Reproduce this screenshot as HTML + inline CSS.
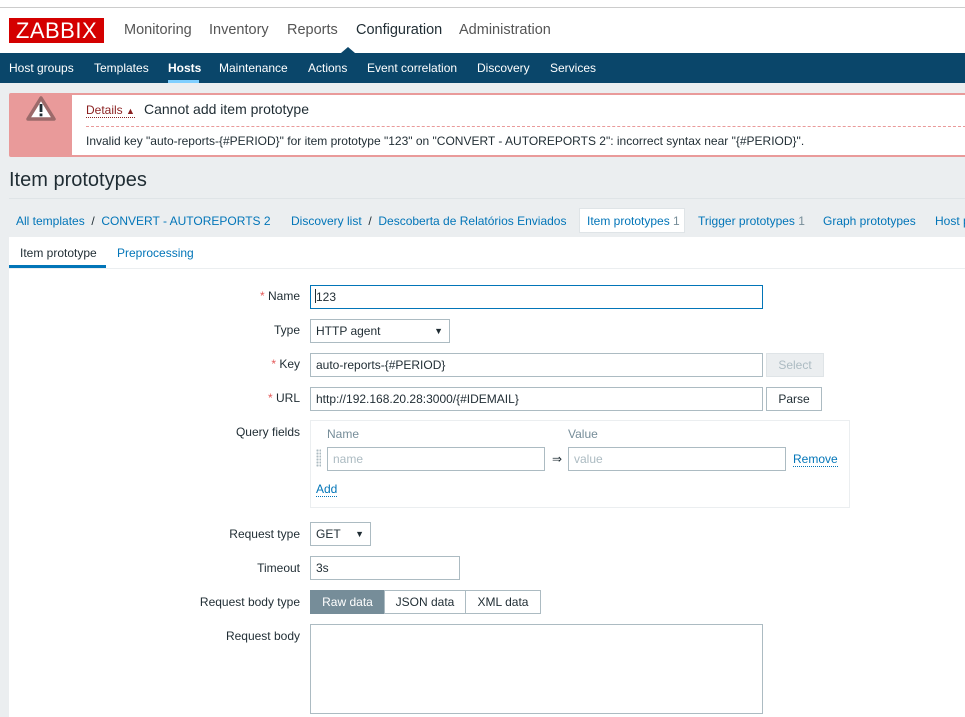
<!DOCTYPE html>
<html><head><meta charset="utf-8"><style>
*{box-sizing:border-box;margin:0;padding:0}
body{width:965px;height:706px;overflow:hidden;background:#ebeef0;font-family:"Liberation Sans",Arial,sans-serif;font-size:12px;color:#1f2c33;position:relative}
.a{position:absolute;white-space:nowrap}
.top{left:0;top:0;width:965px;height:53px;background:#fff}
.logo{left:9px;top:18px;width:95px;height:25px;background:#d40000;color:#fff;font-size:22px;line-height:25px;text-align:center;letter-spacing:0.5px}
.mm{top:22px;font-size:14.5px;color:#555}
.nav{left:0;top:53px;width:965px;height:30px;background:#0a466a}
.nv{top:61px;color:#fff;font-size:12px;font-weight:normal}
.lbl{text-align:right;right:665px;color:#1f2c33}
.inp{border:1px solid #acbbc2;background:#fff;height:24px;padding:0 5px;line-height:22px;color:#1f2c33}
.btn{border:1px solid #acbbc2;background:#fff;height:24px;line-height:22px;text-align:center;color:#1f2c33}
.star{color:#e45959}
.bl{color:#0275b8}
</style></head><body>
<div class="a top"></div>
<div class="a" style="left:0;top:7px;width:965px;height:1px;background:#ccc"></div>
<div class="a logo">ZABBIX</div>
<div class="a mm" style="left:124px">Monitoring</div>
<div class="a mm" style="left:209px">Inventory</div>
<div class="a mm" style="left:287px">Reports</div>
<div class="a mm" style="left:356px;color:#1f2c33">Configuration</div>
<div class="a mm" style="left:459px">Administration</div>
<div class="a" style="left:341px;top:47px;width:0;height:0;border-left:7px solid transparent;border-right:7px solid transparent;border-bottom:6px solid #0a466a"></div>
<div class="a nav"></div>
<div class="a nv" style="left:9px">Host groups</div>
<div class="a nv" style="left:94px">Templates</div>
<div class="a nv" style="left:168px;font-weight:bold">Hosts</div>
<div class="a" style="left:168px;top:80px;width:31px;height:3px;background:#7fcfff"></div>
<div class="a nv" style="left:219px">Maintenance</div>
<div class="a nv" style="left:308px">Actions</div>
<div class="a nv" style="left:367px">Event correlation</div>
<div class="a nv" style="left:477px">Discovery</div>
<div class="a nv" style="left:550px">Services</div>

<div class="a" style="left:9px;top:93px;width:960px;height:64px;background:#e99a9a;border-radius:2px"></div>
<div class="a" style="left:72px;top:95px;width:895px;height:60px;background:#fff"></div>
<svg class="a" style="left:24px;top:94px" width="34" height="30" viewBox="0 0 34 30"><path d="M17 4 L30 25 L4 25 Z" fill="#fff" stroke="#9c6a6a" stroke-width="3.5" stroke-linejoin="round"/><rect x="15.6" y="10" width="2.8" height="8" fill="#1f2c33"/><rect x="15.6" y="19.5" width="2.8" height="2.8" fill="#1f2c33"/></svg>
<div class="a" style="left:86px;top:103px;color:#8a1f1f;border-bottom:1px dotted #8a1f1f">Details <span style="font-size:9px">▲</span></div>
<div class="a" style="left:144px;top:101px;font-size:14px">Cannot add item prototype</div>
<div class="a" style="left:86px;top:126px;width:880px;border-top:1px dashed #e99a9a"></div>
<div class="a" style="left:86px;top:134px">Invalid key "auto-reports-{#PERIOD}" for item prototype "123" on "CONVERT - AUTOREPORTS 2": incorrect syntax near "{#PERIOD}".</div>

<div class="a" style="left:9px;top:169px;font-size:20px;color:#1f2c33">Item prototypes</div>
<div class="a" style="left:9px;top:198px;width:956px;height:1px;background:#dfe4e7"></div>
<div class="a bl" style="left:16px;top:214px">All templates &nbsp;<span style="color:#1f2c33">/</span>&nbsp; CONVERT - AUTOREPORTS 2</div>
<div class="a bl" style="left:291px;top:214px">Discovery list &nbsp;<span style="color:#1f2c33">/</span>&nbsp; Descoberta de Relatórios Enviados</div>
<div class="a" style="left:579px;top:208px;width:106px;height:25px;background:#fff;border:1px solid #dfe4e7"></div>
<div class="a bl" style="left:587px;top:214px">Item prototypes <span style="color:#768d99">1</span></div>
<div class="a bl" style="left:698px;top:214px">Trigger prototypes <span style="color:#768d99">1</span></div>
<div class="a bl" style="left:823px;top:214px">Graph prototypes</div>
<div class="a bl" style="left:935px;top:214px">Host p</div>

<div class="a" style="left:9px;top:237px;width:960px;height:480px;background:#fff"></div>
<div class="a" style="left:20px;top:246px">Item prototype</div>
<div class="a bl" style="left:117px;top:246px">Preprocessing</div>
<div class="a" style="left:9px;top:268px;width:956px;height:1px;background:#ebeef0"></div>
<div class="a" style="left:9px;top:265px;width:97px;height:3px;background:#0275b8"></div>

<div class="a lbl" style="top:289px"><span class="star">*</span> Name</div>
<div class="a inp" style="left:310px;top:285px;width:453px;border-color:#0275b8">123</div>
<div class="a" style="left:315px;top:289px;width:1px;height:14px;background:#1f2c33"></div>
<div class="a lbl" style="top:323px">Type</div>
<div class="a inp" style="left:310px;top:319px;width:140px">HTTP agent<span style="position:absolute;right:6px;font-size:9px">▼</span></div>
<div class="a lbl" style="top:357px"><span class="star">*</span> Key</div>
<div class="a inp" style="left:310px;top:353px;width:453px">auto-reports-{#PERIOD}</div>
<div class="a btn" style="left:766px;top:353px;width:58px;background:#ebeef0;color:#acbbc2;border-color:#dfe4e7">Select</div>
<div class="a lbl" style="top:391px"><span class="star">*</span> URL</div>
<div class="a inp" style="left:310px;top:387px;width:453px">http://192.168.20.28:3000/{#IDEMAIL}</div>
<div class="a btn" style="left:766px;top:387px;width:56px">Parse</div>
<div class="a lbl" style="top:425px">Query fields</div>
<div class="a" style="left:310px;top:420px;width:540px;height:88px;border:1px solid #ebeef0"></div>
<div class="a" style="left:327px;top:427px;color:#768d99">Name</div>
<div class="a" style="left:568px;top:427px;color:#768d99">Value</div>
<div class="a" style="left:316px;top:449px;width:5px;height:18px;background:radial-gradient(circle,#acbbc2 1px,transparent 1.2px) 0 0/3px 3px"></div>
<div class="a inp" style="left:327px;top:447px;width:218px;color:#acbbc2">name</div>
<div class="a" style="left:552px;top:452px">⇒</div>
<div class="a inp" style="left:568px;top:447px;width:218px;color:#acbbc2">value</div>
<div class="a bl" style="left:793px;top:452px;border-bottom:1px dotted #0275b8">Remove</div>
<div class="a bl" style="left:316px;top:482px;border-bottom:1px dotted #0275b8">Add</div>

<div class="a lbl" style="top:527px">Request type</div>
<div class="a inp" style="left:310px;top:522px;width:61px">GET<span style="position:absolute;right:6px;font-size:9px">▼</span></div>
<div class="a lbl" style="top:561px">Timeout</div>
<div class="a inp" style="left:310px;top:556px;width:150px">3s</div>
<div class="a lbl" style="top:595px">Request body type</div>
<div class="a btn" style="left:310px;top:590px;width:75px;background:#768d99;color:#fff;border-color:#768d99">Raw data</div>
<div class="a btn" style="left:384px;top:590px;width:82px">JSON data</div>
<div class="a btn" style="left:465px;top:590px;width:76px">XML data</div>
<div class="a lbl" style="top:629px">Request body</div>
<div class="a" style="left:310px;top:624px;width:453px;height:90px;border:1px solid #acbbc2"></div>
</body></html>
